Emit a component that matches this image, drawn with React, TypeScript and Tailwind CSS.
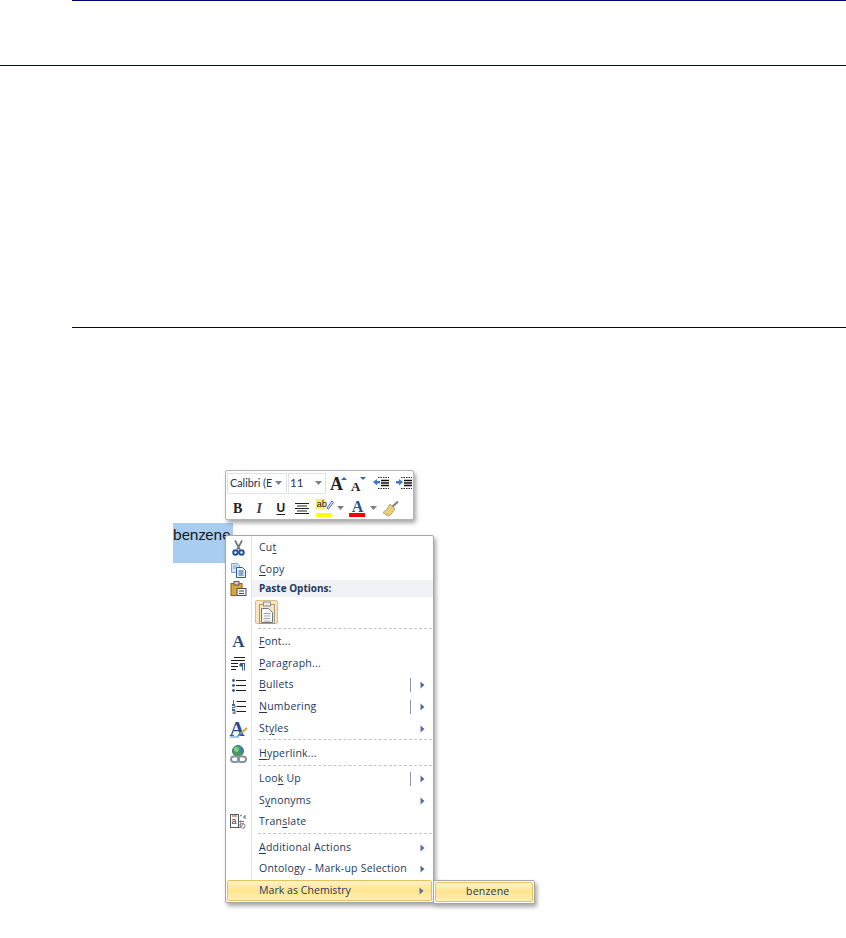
import React from "react";

const Arrow = () => (
  <svg width="5" height="8" viewBox="0 0 5 8" className="block"><path d="M0.5 0.5 L4.5 4 L0.5 7.5Z" fill="#5a6d9a" /></svg>
);
const Down = () => (
  <svg width="7" height="4" viewBox="0 0 7 4" className="block"><path d="M0 0 H7 L3.5 4Z" fill="#7a7f88" /></svg>
);

const Cut = () => (
  <svg width="13" height="16" viewBox="0 0 13 16">
    <path d="M3 0.5 L7.8 9.5 M10 0.5 L5.2 9.5" stroke="#6f747c" strokeWidth="1.7" fill="none" />
    <circle cx="3.5" cy="12.5" r="2.2" fill="none" stroke="#1f4f9e" strokeWidth="2" />
    <circle cx="9.5" cy="12.5" r="2.2" fill="none" stroke="#1f4f9e" strokeWidth="2" />
  </svg>
);
const CopyIcon = () => (
  <svg width="17" height="16" viewBox="0 0 17 16">
    <path d="M1.5 1.5H7.5L9.5 3.5V10.5H1.5Z" fill="#d5e5f7" stroke="#7aa2d4" />
    <path d="M3 4H7M3 6H7" stroke="#7aa2d4" />
    <path d="M6.5 5.5H12.5L15.5 8.5V15.5H6.5Z" fill="#eaf2fb" stroke="#2f5a94" />
    <path d="M8.5 9H13.5M8.5 11H13.5M8.5 13H13.5" stroke="#2f5a94" />
  </svg>
);
const PasteIcon = () => (
  <svg width="17" height="15" viewBox="0 0 17 15">
    <rect x="1" y="2.5" width="11" height="12" fill="#d9a63e" stroke="#8b5f18" />
    <rect x="4" y="0.5" width="5" height="3.5" fill="#c7cdd6" stroke="#6d5a38" />
    <rect x="7" y="7.5" width="9" height="7" fill="#eef1f5" stroke="#4a4f58" />
    <path d="M9 10H14M9 12.5H14" stroke="#4a4f58" />
  </svg>
);
const BigPaste = () => (
  <svg width="18" height="23" viewBox="0 0 18 23">
    <rect x="1.5" y="3.5" width="15" height="19" fill="#f7e2bd" stroke="#a89a80" />
    <rect x="5.5" y="1" width="7" height="4" fill="#e8e8e8" stroke="#8f8f8f" />
    <path d="M3.5 7.5H10.5L14.5 11.5V21.5H3.5Z" fill="#fff" stroke="#6f7780" />
    <path d="M5.5 12.5H12.5M5.5 15H12.5M5.5 17.5H12.5M5.5 20H12.5" stroke="#9aa2ab" />
  </svg>
);
const ParaIcon = () => (
  <svg width="15" height="14" viewBox="0 0 15 14">
    <path d="M3 0.5H14M0 3.5H14M0 6.5H7M0 9.5H7M0 12.5H5" stroke="#1d1d1d" />
    <path d="M9 6.5H14M11.5 6.5V13.5M13.5 6.5V13.5" stroke="#3c5d8c" />
    <circle cx="10" cy="8" r="1.8" fill="#3c5d8c" />
  </svg>
);
const BulletIcon = () => (
  <svg width="14" height="13" viewBox="0 0 14 13">
    <path d="M4 1.5H14M4 6.5H14M4 11.5H14" stroke="#1d1d1d" />
    <circle cx="1.5" cy="1.5" r="1.4" fill="#33568c" />
    <circle cx="1.5" cy="6.5" r="1.4" fill="#33568c" />
    <circle cx="1.5" cy="11.5" r="1.4" fill="#33568c" />
  </svg>
);
const NumberIcon = () => (
  <svg width="14" height="14" viewBox="0 0 14 14">
    <path d="M4.5 1.5H14M4.5 6.5H14M4.5 11.5H14" stroke="#1d1d1d" />
    <path d="M1.5 0V4M0 4.5H3M0 5.5H3V7.5H0V9.5H3M0 10.5H3V14H0M0.5 12.2H3" stroke="#33568c" strokeWidth="0.9" fill="none" />
  </svg>
);
const StylesIcon = () => (
  <span className="relative block h-[18px] w-[18px]">
    <span className="absolute left-0 top-[-1px] font-['Liberation_Serif',serif] text-[21px] font-bold leading-[20px] text-[#2a4f8f]">A</span>
    <svg width="18" height="18" viewBox="0 0 18 18" className="absolute left-0 top-0">
      <path d="M10 14 L17 8" stroke="#d9a63e" strokeWidth="2" />
      <path d="M7 16.5 Q11 16.5 12 13 L9.5 12Z" fill="#4f86d6" />
      <path d="M0 17 H9" stroke="#4f86d6" />
    </svg>
  </span>
);
const LinkIcon = () => (
  <svg width="17" height="18" viewBox="0 0 17 18">
    <circle cx="8" cy="6" r="5.5" fill="#4d9a57" stroke="#3b6ea8" />
    <path d="M4 3 Q6 1 8 2.5 T7.5 7 Q4.5 7.5 4 5Z" fill="#7ed07a" />
    <path d="M11 2 Q14 5 12 8.5 Q9.5 8 10 5Z" fill="#3f78c2" />
    <rect x="1" y="11.5" width="8" height="5.5" rx="2.7" fill="none" stroke="#8a93a0" strokeWidth="2" />
    <rect x="8" y="11.5" width="8" height="5.5" rx="2.7" fill="none" stroke="#8a93a0" strokeWidth="2" />
  </svg>
);
const TranslateIcon = () => (
  <span className="relative block h-[16px] w-[17px]">
    <svg width="17" height="16" viewBox="0 0 17 16" className="absolute left-0 top-0">
      <rect x="0.5" y="0.5" width="8" height="13" fill="#fff" stroke="#555b63" />
      <path d="M2 2H7" stroke="#c0392b" />
      <path d="M10 2 L12 1 M13 3 L15 3 M15 1 L15 5" stroke="#4a6fa5" />
    </svg>
    <span className="absolute left-[1.5px] top-[1px] font-['Liberation_Sans',sans-serif] text-[9px] leading-[13px] text-[#333]">a</span>
    <span className="absolute left-[7px] top-[5px] font-['Noto_Sans_CJK_JP',sans-serif] text-[9px] leading-[11px] text-[#555]">あ</span>
  </span>
);

const Sep = () => (
  <div className="flex h-[3.5px] items-start">
    <div className="h-full w-[26px] border-r border-[#e2e4e7]" />
    <div className="ml-[6px] mr-px flex-1 border-t border-dashed border-[#c5c5c5]" />
  </div>
);

function Row({ icon, children, bar, arrow, h = "h-[21.7px]" }: { icon?: React.ReactNode; children: React.ReactNode; bar?: boolean; arrow?: boolean; h?: string }) {
  return (
    <div className={`flex items-center ${h}`}>
      <div className="flex h-full w-[26px] shrink-0 items-center justify-center border-r border-[#e2e4e7]">{icon}</div>
      <div className="ml-[7px] flex-1 whitespace-nowrap">{children}</div>
      {bar && <div className="mr-[9px] h-[14px] w-px bg-[#8d96a3]" />}
      {arrow && <div className="mr-[8px]"><Arrow /></div>}
    </div>
  );
}

const U = ({ children }: { children: React.ReactNode }) => <span className="underline underline-offset-2">{children}</span>;

const IndentLines = () => (
  <>
    <path d="M6 1.5H17M6 12.5H17" stroke="#222" strokeDasharray="1.5 1" />
    <path d="M9 4.5H17M9 7H17M9 9.5H17" stroke="#111" strokeWidth="1.3" />
  </>
);

function Toolbar() {
  return (
    <div className="absolute left-[225px] top-[470px] h-[50px] w-[189px] rounded-[2px] border border-[#b4b4b4] bg-white pl-px pt-px font-['Open_Sans',sans-serif] text-[#1e1e1e] shadow-[2px_3px_4px_rgba(0,0,0,0.35)]">
      <div className="flex h-[22px] items-center">
        <div className="flex h-[21px] w-[60px] items-center justify-between border border-[#dfe3e8] pl-[2px] pr-[4px]">
          <span className="whitespace-nowrap font-['Lato',sans-serif] text-[10.8px] text-[#22324a]">Calibri (E</span>
          <Down />
        </div>
        <div className="ml-px flex h-[21px] w-[38px] items-center justify-between border border-[#dfe3e8] pl-[1px] pr-[3px] text-[11.5px]">
          <span className="font-['Lato',sans-serif] text-[#22324a]">11</span>
          <Down />
        </div>
        <div className="relative ml-[4px] h-[18px] w-[15px] font-['Liberation_Serif',serif] text-[18px] font-bold leading-[21px] text-[#222]">
          A<span className="absolute right-[-2px] top-[3px] h-0 w-0 border-x-[3px] border-b-[3px] border-x-transparent border-b-[#3a63a8]" />
        </div>
        <div className="relative ml-[6px] h-[18px] w-[14px] font-['Liberation_Serif',serif] text-[13px] font-bold leading-[25px] text-[#222]">
          A<span className="absolute right-[-1px] top-[3px] h-0 w-0 border-x-[3px] border-t-[3px] border-x-transparent border-t-[#3a63a8]" />
        </div>
        <svg width="18" height="14" viewBox="0 0 18 14" className="ml-[7px]">
          <IndentLines />
          <path d="M1 6 L5 3V5H8V7.5H5V9.5Z" fill="#3d78c9" />
        </svg>
        <svg width="18" height="14" viewBox="0 0 18 14" className="ml-[5px]">
          <IndentLines />
          <path d="M8 6 L4 3V5H1V7.5H4V9.5Z" fill="#3d78c9" />
        </svg>
      </div>
      <div className="mt-[3px] flex h-[22px] items-center">
        <div className="w-[21.5px] text-center font-['Liberation_Serif',serif] text-[14px] font-bold text-[#222]">B</div>
        <div className="w-[21.5px] text-center font-['Liberation_Serif',serif] text-[14px] font-bold italic text-[#444]">I</div>
        <div className="w-[21.5px] text-center font-['Liberation_Sans',sans-serif] text-[12px] font-bold text-[#222] underline underline-offset-2">U</div>
        <div className="flex w-[21.5px] justify-center">
          <svg width="14" height="11" viewBox="0 0 14 11"><path d="M0 .5H14M2 3H12M0 5.5H14M2 8H12M0 10.5H14" stroke="#222" /></svg>
        </div>
        <div className="relative ml-[3px] h-[18px] w-[18px]">
          <span className="absolute left-0 top-0 h-[10px] w-[10px] bg-[#f5f06a]" />
          <span className="absolute left-[0.5px] top-[-1px] font-['Liberation_Sans',sans-serif] text-[9.5px] leading-[12px] text-[#222]">ab</span>
          <svg width="8" height="11" viewBox="0 0 8 11" className="absolute left-[10px] top-0"><path d="M1 9 L6 2 L7.5 3.5 L2.5 10Z" fill="#dfe7f2" stroke="#4a6fa5" /></svg>
          <span className="absolute bottom-0 left-0 h-[4px] w-[16px] bg-[#ffff00]" />
        </div>
        <div className="flex w-[12px] justify-center"><Down /></div>
        <div className="relative ml-[3px] h-[18px] w-[17px] text-center font-['Liberation_Serif',serif] text-[16px] font-bold leading-[15px] text-[#2a4f8f]">
          A<span className="absolute bottom-0 left-0 h-[4px] w-[16px] bg-[#ff0000]" />
        </div>
        <div className="ml-[2px] flex w-[11px] justify-center"><Down /></div>
        <svg width="16" height="15" viewBox="0 0 16 15" className="ml-[4px]">
          <path d="M15 0.5 L9 6" stroke="#7a7f88" strokeWidth="2" />
          <path d="M7 3 L12 8 L7 14.5 Q3 15 0 11.5 Q4 9.5 7 3Z" fill="#e8cf7c" stroke="#9a8a50" strokeWidth="0.7" />
        </svg>
      </div>
    </div>
  );
}

function Menu() {
  return (
    <div className="absolute left-[225px] top-[535px] w-[209px] rounded-[2px] border border-[#a6a6a6] bg-white font-['Open_Sans',sans-serif] text-[10.5px] tracking-[0.22px] text-[#1e395b] shadow-[2px_3px_4px_rgba(0,0,0,0.35)]">
      <Row icon={<Cut />} h="h-[23px]">Cu<U>t</U></Row>
      <Row icon={<CopyIcon />} h="h-[21px]"><U>C</U>opy</Row>
      <div className="flex h-[17px] items-center">
        <div className="flex h-full w-[26px] items-center justify-center border-r border-[#e2e4e7]"><PasteIcon /></div>
        <div className="flex h-full flex-1 items-center bg-[#f0f2f5] pl-[7px] text-[10px] font-bold tracking-normal">Paste Options:</div>
      </div>
      <div className="flex h-[30.5px] items-start pt-[3px]">
        <div className="-mt-[3px] h-[30.5px] w-[26px] border-r border-[#e2e4e7]" />
        <div className="ml-[3px] flex h-[24px] w-[23px] items-center justify-center rounded-[2px] border border-[#d9bd87] bg-[#fbe5c0]"><BigPaste /></div>
      </div>
      <Sep />
      <Row icon={<span className="font-['Liberation_Serif',serif] text-[17px] font-bold leading-none text-[#2a4a80]">A</span>}><U>F</U>ont...</Row>
      <Row icon={<ParaIcon />}><U>P</U>aragraph...</Row>
      <Row icon={<BulletIcon />} bar arrow><U>B</U>ullets</Row>
      <Row icon={<NumberIcon />} bar arrow><U>N</U>umbering</Row>
      <Row icon={<StylesIcon />} arrow>St<U>y</U>les</Row>
      <Sep />
      <Row icon={<LinkIcon />}><U>H</U>yperlink...</Row>
      <Sep />
      <Row bar arrow>Loo<U>k</U> Up</Row>
      <Row arrow>S<U>y</U>nonyms</Row>
      <Row icon={<TranslateIcon />}>Tran<U>s</U>late</Row>
      <Sep />
      <Row arrow><U>A</U>dditional Actions</Row>
      <Row arrow>Ontology - Mark-up Selection</Row>
      <div className="mx-px mb-px flex h-[21px] items-center rounded-[2px] border border-[#e6c15f] bg-gradient-to-b from-[#fff3c6] via-[#ffe48e] to-[#fff0b5] pl-[31px] pr-[7px]">
        <span className="flex-1 whitespace-nowrap tracking-[0.05px]">Mark as Chemistry</span>
        <Arrow />
      </div>
    </div>
  );
}

function Submenu() {
  return (
    <div className="absolute left-[433px] top-[880px] flex h-[24px] w-[102px] rounded-[2px] border border-[#a6a6a6] bg-white p-px font-['Open_Sans',sans-serif] text-[10.5px] tracking-[0.22px] text-[#1e395b] shadow-[2px_3px_4px_rgba(0,0,0,0.35)]">
      <div className="flex flex-1 items-center rounded-[2px] border border-[#e6c15f] bg-gradient-to-b from-[#fff3c6] via-[#ffe48e] to-[#fff0b5] pl-[30px]">benzene</div>
    </div>
  );
}

export default function App() {
  return (
    <div className="relative h-[938px] w-[846px] overflow-hidden bg-white">
      <div className="ml-[72px] h-px bg-[#000066]" />
      <div className="mt-[64px] h-px bg-[#000066]" />
      <div className="ml-[72px] mt-[261px] h-px bg-[#000066]" />
      <div className="ml-[173px] mt-[195px] h-[40px] w-[60px] bg-[#a8cdf1] font-['Lato',sans-serif] text-[15.5px] leading-[23px] text-[#1a1a1a]">benzene</div>
      <Toolbar />
      <Menu />
      <Submenu />
    </div>
  );
}
